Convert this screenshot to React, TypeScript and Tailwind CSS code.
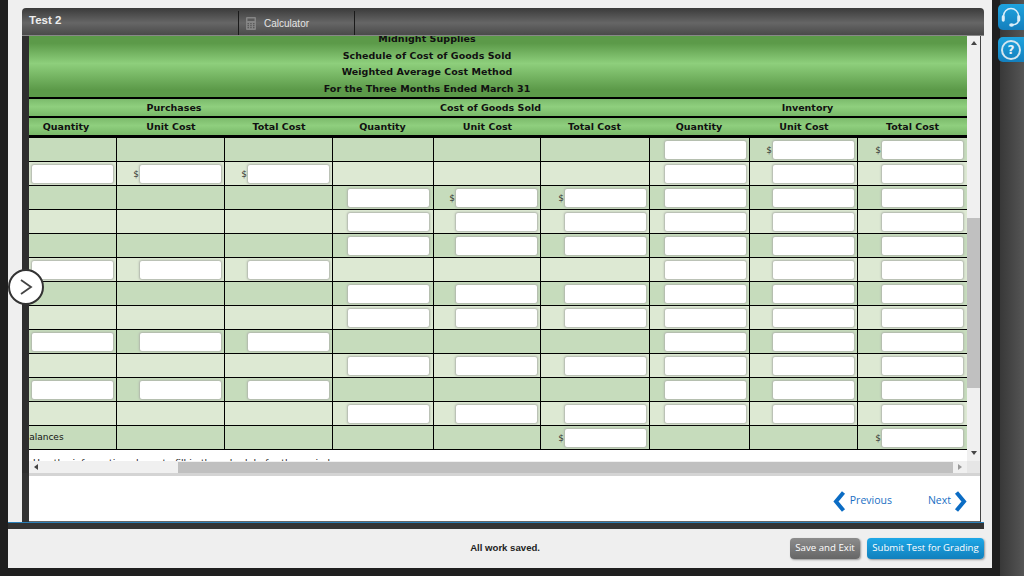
const columns = "grid grid-cols-[88px_108px_108px_101px_107px_109px_100px_108px_109px]";

// per row: which columns hold an input, and which of them have a $ sign
const rows: { inputs: number[]; dollars: number[]; label?: string }[] = [
  { inputs: [6, 7, 8], dollars: [7, 8] },
  { inputs: [0, 1, 2, 6, 7, 8], dollars: [1, 2] },
  { inputs: [3, 4, 5, 6, 7, 8], dollars: [4, 5] },
  { inputs: [3, 4, 5, 6, 7, 8], dollars: [] },
  { inputs: [3, 4, 5, 6, 7, 8], dollars: [] },
  { inputs: [0, 1, 2, 6, 7, 8], dollars: [] },
  { inputs: [3, 4, 5, 6, 7, 8], dollars: [] },
  { inputs: [3, 4, 5, 6, 7, 8], dollars: [] },
  { inputs: [0, 1, 2, 6, 7, 8], dollars: [] },
  { inputs: [3, 4, 5, 6, 7, 8], dollars: [] },
  { inputs: [0, 1, 2, 6, 7, 8], dollars: [] },
  { inputs: [3, 4, 5, 6, 7, 8], dollars: [] },
  { inputs: [5, 8], dollars: [5, 8], label: "Balances" },
];

const headers = ["Quantity", "Unit Cost", "Total Cost", "Quantity", "Unit Cost", "Total Cost", "Quantity", "Unit Cost", "Total Cost"];

const greenBand = "bg-[linear-gradient(to_bottom,#7cbb6c,#8fcf7e_45%,#78b868)]";

function Cell({ index, hasInput, dollar, label }: { index: number; hasInput: boolean; dollar: boolean; label?: string }) {
  return (
    <div className={`flex h-[24px] items-center justify-end border-b border-black ${index < 8 ? "border-r" : ""} ${index === 3 || index === 8 ? "pr-[4px]" : "pr-[3px]"}`}>
      {label && (
        <div className="w-full overflow-hidden whitespace-nowrap pt-[1px] text-[9px] text-[#111]">
          <div className="-ml-[6px]">{label}</div>
        </div>
      )}
      {dollar && <span className="mr-[1px] mt-[2px] text-[9px] leading-none text-[#333]">$</span>}
      {hasInput && <div className="h-[18px] w-[81px] rounded-[2px] bg-white shadow-[0_0_2px_1px_#b0b5ac]" />}
    </div>
  );
}

export default function App() {
  return (
    <div className="flex h-[576px] w-[1024px] overflow-hidden bg-[#1f1f1f] font-['DejaVu_Sans',sans-serif]">
      {/* main light panel */}
      <div className="ml-[8px] flex h-[568px] w-[984px] flex-col bg-[#efefef]">
        <div className="ml-[14px] mr-[8px] mt-[8px] flex h-[28px] rounded-t-[4px] bg-[linear-gradient(to_bottom,#3a3a3a,#666_55%,#4a4a4a)] border-b border-[#888]">
          <div className="w-[216px] pl-[7px] pt-[4px] font-['Liberation_Sans',sans-serif] text-[11.5px] font-bold leading-[16px] text-[#eee]">
            Test 2
          </div>
          <div className="mt-[3px] flex w-[117px] items-center border-x border-[#1a1a1a] pl-[7px]">
            <svg width="10" height="13" viewBox="0 0 10 13">
              <rect width="10" height="13" rx="1" fill="#858585" />
              <rect x="1.5" y="1.5" width="7" height="2.5" fill="#5a5a5a" />
              <path d="M1.5 6h1.5v1.2H1.5zM4.2 6h1.5v1.2H4.2zM7 6h1.5v1.2H7zM1.5 8h1.5v1.2H1.5zM4.2 8h1.5v1.2H4.2zM7 8h1.5v1.2H7zM1.5 10h1.5v1.2H1.5zM4.2 10h1.5v1.2H4.2zM7 10h1.5v1.2H7z" fill="#5a5a5a" />
            </svg>
            <span className="ml-[8px] font-['Liberation_Sans',sans-serif] text-[10px] text-[#e5e5e5]">Calculator</span>
          </div>
        </div>

        {/* frame */}
        <div className="relative ml-[14px] mr-[11px] flex h-[486px] flex-col border-r border-[#444] bg-white">
          <div className="flex h-[425px]">
            <div className="w-[7px] bg-[#2e2e2e]" />
            <div className="w-[938px] overflow-hidden">
              <div className="flex h-[61px] flex-col items-center pr-[142px] text-[9.5px] font-bold leading-[16.5px] tracking-[0.05px] text-[#111] bg-[linear-gradient(to_bottom,#5c9a49_12%,#8ecf7c_45%,#5c9a49_88%)]">
                <div className="-mt-[5px]">Midnight Supplies</div>
                <div>Schedule of Cost of Goods Sold</div>
                <div>Weighted Average Cost Method</div>
                <div>For the Three Months Ended March 31</div>
              </div>
              <div className={`${columns} h-[19px] border-t-2 border-black text-center text-[9.5px] font-bold leading-[17px] text-[#111] ${greenBand}`}>
                <div className="col-span-3 pr-[14px]">Purchases</div>
                <div className="col-span-3 pr-[2px]">Cost of Goods Sold</div>
                <div className="col-span-3 pr-[2px]">Inventory</div>
              </div>
              <div className={`${columns} h-[22px] border-t-2 border-b-[3px] border-black text-center text-[9.5px] font-bold leading-[17px] text-[#111] ${greenBand}`}>
                {headers.map((h, i) => (
                  <div key={i} className={i === 0 ? "pr-[14px]" : i === 3 || i === 5 || i === 6 ? "pr-[2px]" : ""}>
                    {h}
                  </div>
                ))}
              </div>
              {rows.map((row, r) => (
                <div key={r} className={`${columns} ${r % 2 === 0 ? "bg-[#c6dcbc]" : "bg-[#dde9d3]"}`}>
                  {headers.map((_, c) => (
                    <Cell
                      key={c}
                      index={c}
                      hasInput={row.inputs.includes(c)}
                      dollar={row.dollars.includes(c)}
                      label={c === 0 ? row.label : undefined}
                    />
                  ))}
                </div>
              ))}
              {/* next line of the scrolled content, only its top shows */}
              <div className="mt-[8px] h-[3px] overflow-hidden whitespace-nowrap pl-[4px] text-[9.5px] leading-[12px] text-[#222]">
                <div className="-mt-[1px]">Use the information above to fill in the schedule for the period.</div>
              </div>
            </div>
            {/* vertical scrollbar */}
            <div className="flex w-[13px] flex-col items-center bg-[#f0f0f0]">
              <div className="mt-[5px] h-0 w-0 border-x-[3px] border-b-[4px] border-x-transparent border-b-[#444]" />
              <div className="mt-[173px] h-[170px] w-full bg-[#c0c0c0]" />
              <div className="mt-[63px] h-0 w-0 border-x-[3px] border-t-[4px] border-x-transparent border-t-[#444]" />
            </div>
          </div>

          {/* horizontal scrollbar */}
          <div className="flex h-[12px]">
            <div className="w-[7px] bg-[#2e2e2e]" />
            <div className="flex w-[938px] items-center bg-[#f0f0f0]">
              <div className="ml-[5px] h-0 w-0 border-y-[3px] border-r-[4px] border-y-transparent border-r-[#444]" />
              <div className="ml-[140px] h-[11px] w-[775px] bg-[#c0c0c0]" />
              <div className="ml-[5px] h-0 w-0 border-y-[3px] border-l-[4px] border-y-transparent border-l-[#999]" />
            </div>
            <div className="w-[13px] bg-[#e6e6e6]" />
          </div>

          {/* prev / next */}
          <div className="flex flex-1">
            <div className="w-[7px] bg-[#333]" />
            <div className="flex flex-1 items-center justify-end border-t-[3px] border-b-[1px] border-t-[#d4d4d4] border-b-[#666] pr-[13px] pt-[5px] font-['Open_Sans',sans-serif] text-[10.5px] text-[#1a6fc4]">
              <svg width="13" height="21" viewBox="0 0 13 21">
                <path d="M10.5 1.5 3 10.5l7.5 9" fill="none" stroke="#0b6cc4" strokeWidth="4" />
              </svg>
              <span className="ml-[4px]">Previous</span>
              <span className="ml-[36px]">Next</span>
              <svg className="ml-[3px]" width="13" height="21" viewBox="0 0 13 21">
                <path d="M2.5 1.5 10 10.5l-7.5 9" fill="none" stroke="#0b6cc4" strokeWidth="4" />
              </svg>
            </div>
          </div>

          {/* round toggle over the left edge */}
          <div className="absolute left-[-14px] top-[233px] flex h-[36px] w-[36px] items-center justify-center rounded-full border-2 border-[#333] bg-white">
            <svg width="14" height="18" viewBox="0 0 14 18">
              <path d="M2 2l10 7-10 7" fill="none" stroke="#444" strokeWidth="1.8" />
            </svg>
          </div>
        </div>

        <div className="mr-[8px] h-[1px] bg-[#2a7fb8]" />
        <div className="mr-[8px] h-[6px] bg-[#333]" />

        {/* footer */}
        <div className="mr-[8px] flex flex-1 items-center justify-end">
          <span className="mr-[250px] font-['Liberation_Sans',sans-serif] text-[9.6px] font-bold text-[#222]">All work saved.</span>
          <button className="h-[21px] w-[70px] rounded-[4px] bg-[linear-gradient(to_bottom,#8c8c8c,#666)] font-['Open_Sans',sans-serif] text-[9.7px] text-white shadow-[1px_1px_2px_#999]">
            Save and Exit
          </button>
          <button className="ml-[7px] h-[21px] w-[117px] rounded-[4px] bg-[linear-gradient(to_bottom,#1ea7e6,#1180bd)] font-['Open_Sans',sans-serif] text-[9.6px] text-white shadow-[1px_1px_2px_#999]">
            Submit Test for Grading
          </button>
        </div>
      </div>

      {/* right rail */}
      <div className="ml-[8px] flex h-full w-[24px] flex-col bg-[linear-gradient(to_right,#383838,#555)]">
        <div className="-ml-[2px] mt-[4px] flex h-[26px] w-[26px] items-center justify-center rounded-l-[5px] bg-[linear-gradient(to_bottom,#1fa3de,#147fbd)]">
          <svg width="24" height="24" viewBox="0 0 24 24" fill="none" stroke="#dbeef8" strokeWidth="1.5">
            <path d="M4.5 14v-3a7.5 7.5 0 0 1 15 0v3" />
            <path d="M19.5 15c0 3-2.5 4.5-6 4.8" />
            <ellipse cx="12.5" cy="20" rx="1.6" ry="0.9" fill="#dbeef8" />
            <rect x="3.5" y="11" width="1.5" height="5" rx="0.7" fill="#dbeef8" />
            <rect x="19" y="11" width="1.5" height="5" rx="0.7" fill="#dbeef8" />
          </svg>
        </div>
        <div className="-ml-[2px] mt-[7px] flex h-[25px] w-[26px] items-center justify-center rounded-l-[5px] bg-[linear-gradient(to_bottom,#1fa3de,#147fbd)]">
          <div className="flex h-[20px] w-[20px] items-center justify-center rounded-full border-2 border-[#d5e6ef] text-[12px] font-bold leading-none text-[#e8f4fa]">
            ?
          </div>
        </div>
      </div>
    </div>
  );
}
